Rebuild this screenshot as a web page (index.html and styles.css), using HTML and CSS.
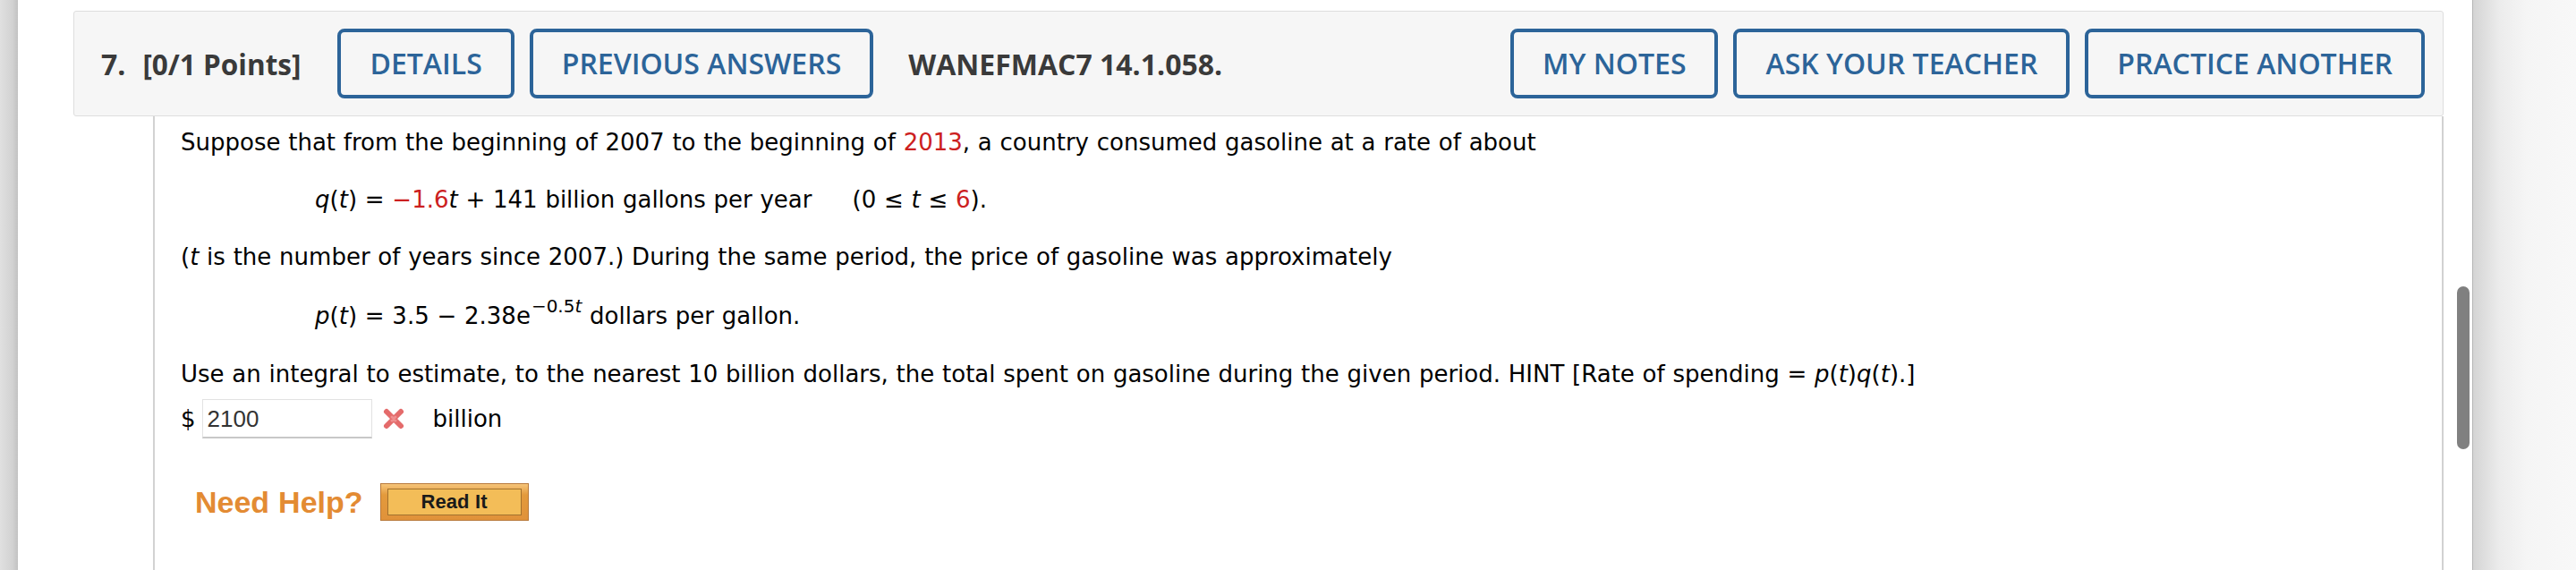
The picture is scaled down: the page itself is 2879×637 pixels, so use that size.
FILE: index.html
```html
<!DOCTYPE html>
<html lang="en">
<head>
<meta charset="utf-8">
<title>Question 7</title>
<link rel="stylesheet" href="styles.css">
</head>
<body>
<div class="app">
  <div class="edge-left"></div>
  <main class="page">
    <section class="question">
      <header class="q-head">
        <span class="q-num">7.</span>
        <span class="q-points">[0/1 Points]</span>
        <button class="btn">DETAILS</button>
        <button class="btn btn-last-left">PREVIOUS ANSWERS</button>
        <span class="q-code">WANEFMAC7 14.1.058.</span>
        <div class="spacer"></div>
        <button class="btn">MY NOTES</button>
        <button class="btn">ASK YOUR TEACHER</button>
        <button class="btn btn-end">PRACTICE ANOTHER</button>
      </header>
      <div class="q-body">
        <p class="para first">Suppose that from the beginning of 2007 to the beginning of <span class="red">2013</span>, a country consumed gasoline at a rate of about</p>
        <p class="para eq"><i>q</i>(<i>t</i>) = <span class="red">−1.6</span><i>t</i> + 141 billion gallons per year<span class="domain">(0 ≤ <i>t</i> ≤ <span class="red">6</span>).</span></p>
        <p class="para">(<i>t</i> is the number of years since 2007.) During the same period, the price of gasoline was approximately</p>
        <p class="para eq eq2"><i>p</i>(<i>t</i>) = 3.5 − 2.38e<span class="sup">−0.5<i>t</i></span> dollars per gallon.</p>
        <p class="para p5">Use an integral to estimate, to the nearest 10 billion dollars, the total spent on gasoline during the given period. HINT [Rate of spending = <i>p</i>(<i>t</i>)<i>q</i>(<i>t</i>).]</p>
        <div class="answer">
          <span class="dollar">$</span>
          <span class="input">2100</span>
          <svg class="wrong" width="26" height="26" viewBox="0 0 26 26" aria-label="incorrect">
            <path d="M5 5 L21 21 M21 5 L5 21" stroke="#e46b6b" stroke-width="6" stroke-linecap="round"/>
            <path d="M11 11 L15 15 M15 11 L11 15" stroke="#ef8f8f" stroke-width="3" stroke-linecap="round"/>
          </svg>
          <span class="unit">billion</span>
        </div>
        <div class="help">
          <span class="need-help">Need Help?</span>
          <span class="read-it"><span class="read-it-inner">Read It</span></span>
        </div>
      </div>
    </section>
    <div class="gutter"><div class="thumb"></div></div>
  </main>
  <div class="edge-right"></div>
</div>
</body>
</html>
```

FILE: styles.css
```css
html, body {
  margin: 0;
  padding: 0;
  background: #ffffff;
}

.app {
  display: flex;
  height: 637px;
  overflow: hidden;
}

.edge-left {
  width: 20px;
  flex: none;
  background: linear-gradient(to right, #e0e0e0, #d2d2d2 70%, #c2c2c2);
}

.edge-right {
  width: 115px;
  flex: none;
  border-left: 1px solid #b4b4b4;
  background: linear-gradient(to right, #d4d4d4, #ececec 30px, #f5f5f5 60px, #f8f8f8);
}

.page {
  flex: 1;
  display: flex;
  padding: 12px 0 0 62px;
  background: #ffffff;
}

.question {
  width: 2649px;
  flex: none;
  display: flex;
  flex-direction: column;
}

.q-head {
  box-sizing: border-box;
  height: 118px;
  display: flex;
  align-items: center;
  padding: 0 20px 0 30px;
  background: #f6f6f6;
  border: 1px solid #dedede;
  border-radius: 3px;
  font-family: "Open Sans", "Liberation Sans", sans-serif;
  color: #3a3a3a;
}

.q-num {
  font-size: 32px;
  font-weight: 700;
  margin-right: 19px;
}

.q-points {
  font-size: 31.5px;
  font-weight: 700;
  margin-right: 41px;
}

.q-code {
  font-size: 32px;
  font-weight: 700;
}

.spacer {
  flex: 1;
}

.btn {
  box-sizing: border-box;
  height: 78px;
  padding: 0 32px;
  margin-right: 17px;
  background: transparent;
  border: 4px solid #2c6499;
  border-radius: 8px;
  font-family: "Open Sans", "Liberation Sans", sans-serif;
  font-size: 32px;
  font-weight: 600;
  color: #2c6499;
  line-height: 1;
}

.btn-last-left {
  margin-right: 39px;
}

.btn-end {
  margin-right: 0;
}

.q-body {
  flex: 1;
  margin-left: 89px;
  padding: 14px 0 0 29px;
  border-left: 2px solid #d2d2d2;
  border-right: 2px solid #d2d2d2;
  font-family: "DejaVu Sans", Verdana, sans-serif;
  font-size: 26px;
  word-spacing: 0.5px;
  line-height: 30px;
  color: #000000;
}

.para {
  margin: 34px 0 0 0;
}

.para.first {
  margin-top: 0;
}

.eq {
  padding-left: 150px;
}

.eq2 {
  margin-top: 36px;
}

.p5 {
  margin-top: 35px;
}

.red {
  color: #cc2020;
}

.domain {
  margin-left: 45px;
}

.sup {
  font-size: 20px;
  line-height: 0;
  vertical-align: 13px;
  margin-left: 1px;
}

.answer {
  display: flex;
  align-items: center;
  height: 44px;
  margin-top: 13px;
}

.dollar {
  margin-right: 7px;
}

.input {
  box-sizing: border-box;
  width: 190px;
  height: 44px;
  display: flex;
  align-items: center;
  padding-left: 5px;
  border: 1px solid #e2e2e2;
  border-bottom: 2px solid #c8c8c8;
  font-family: "Liberation Sans", Arial, sans-serif;
  font-size: 26px;
  color: #333333;
  background: #ffffff;
}

.wrong {
  margin-left: 11px;
  margin-right: 31px;
}

.help {
  display: flex;
  align-items: center;
  margin-top: 50px;
  padding-left: 16px;
  height: 42px;
}

.need-help {
  font-family: "Liberation Sans", Arial, sans-serif;
  font-size: 34px;
  font-weight: 700;
  color: #e38b33;
  margin-right: 19px;
  line-height: 1;
}

.read-it {
  box-sizing: border-box;
  width: 166px;
  height: 42px;
  display: flex;
  padding: 5px 7px;
  background: linear-gradient(to bottom, #f6c57a, #e39a3c 30%, #e0923a);
  border: 1px solid #b8793a;
}

.read-it-inner {
  flex: 1;
  display: flex;
  align-items: center;
  justify-content: center;
  background: #f3bd58;
  border: 1px solid #a2712e;
  font-family: "Liberation Sans", Arial, sans-serif;
  font-size: 22px;
  font-weight: 700;
  color: #1a1a1a;
}

.gutter {
  flex: 1;
  padding: 308px 0 0 15px;
}

.thumb {
  width: 14px;
  height: 182px;
  border-radius: 7px;
  background: #808080;
}
```
